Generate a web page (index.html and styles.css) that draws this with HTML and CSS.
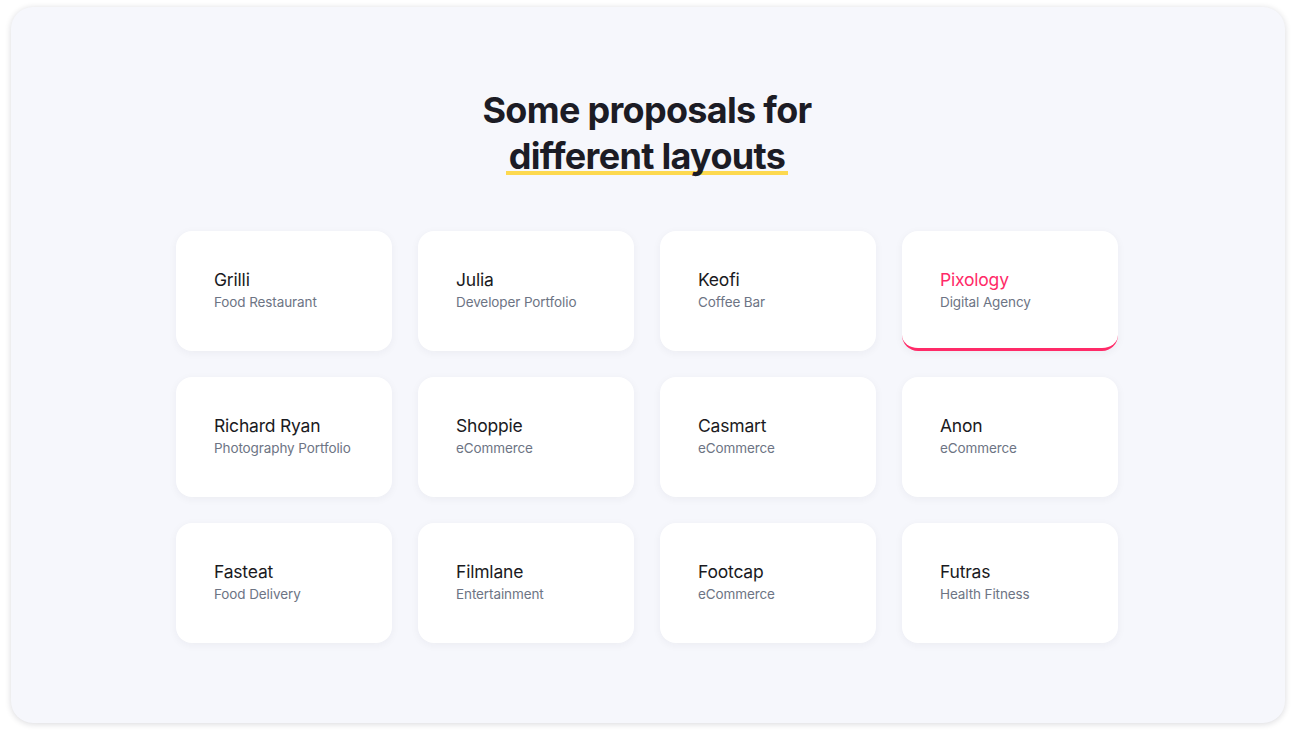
FILE: index.html
```html
<!DOCTYPE html>
<html lang="en">
<head>
<meta charset="utf-8">
<title>Layouts</title>
<link rel="stylesheet" href="styles.css">
</head>
<body>
<main class="frame">
  <h1 class="title">Some proposals for<br><span class="hl">different layouts</span></h1>
  <section class="grid">
    <a class="card"><span class="name">Grilli</span><span class="kind">Food Restaurant</span></a>
    <a class="card"><span class="name">Julia</span><span class="kind">Developer Portfolio</span></a>
    <a class="card"><span class="name">Keofi</span><span class="kind">Coffee Bar</span></a>
    <a class="card active"><span class="name">Pixology</span><span class="kind">Digital Agency</span></a>
    <a class="card"><span class="name">Richard Ryan</span><span class="kind">Photography Portfolio</span></a>
    <a class="card"><span class="name">Shoppie</span><span class="kind">eCommerce</span></a>
    <a class="card"><span class="name">Casmart</span><span class="kind">eCommerce</span></a>
    <a class="card"><span class="name">Anon</span><span class="kind">eCommerce</span></a>
    <a class="card"><span class="name">Fasteat</span><span class="kind">Food Delivery</span></a>
    <a class="card"><span class="name">Filmlane</span><span class="kind">Entertainment</span></a>
    <a class="card"><span class="name">Footcap</span><span class="kind">eCommerce</span></a>
    <a class="card"><span class="name">Futras</span><span class="kind">Health Fitness</span></a>
  </section>
</main>
</body>
</html>
```
FILE: styles.css
```css
html, body {
  margin: 0;
  padding: 0;
  background: #ffffff;
}
body {
  padding: 7px 11px 13px;
  font-family: Inter, "Noto Sans", sans-serif;
}
.frame {
  box-sizing: border-box;
  height: 716px;
  background: #f6f7fc;
  border-radius: 22px;
  box-shadow: 0 1px 6px rgba(20, 20, 40, 0.16);
  padding-top: 80px;
  padding-right: 2px;
  display: flex;
  flex-direction: column;
  align-items: center;
}
.title {
  margin: 0;
  font-size: 36px;
  line-height: 46px;
  font-weight: 700;
  letter-spacing: -0.7px;
  color: #1c1c25;
  text-align: center;
}
.hl {
  background-image: linear-gradient(#fdd94f, #fdd94f);
  background-repeat: no-repeat;
  background-size: 100% 4px;
  background-position: 0 37px;
  padding: 0 3px;
}
.grid {
  margin-top: 52px;
  display: grid;
  grid-template-columns: repeat(4, 216px);
  grid-auto-rows: 120px;
  gap: 26px;
}
.card {
  box-sizing: border-box;
  background: #ffffff;
  border-radius: 16px;
  box-shadow: 0 2px 8px rgba(30, 30, 60, 0.05);
  padding: 0 20px 2px 38px;
  display: flex;
  flex-direction: column;
  justify-content: center;
  gap: 1px;
}
.name {
  font-size: 17.5px;
  line-height: 22px;
  font-weight: 400;
  color: #1a1a22;
  letter-spacing: -0.2px;
}
.kind {
  font-size: 13.5px;
  line-height: 20px;
  color: #6d7484;
  letter-spacing: -0.1px;
}
.card.active {
  border-bottom: 3px solid #ff2a68;
  padding-top: 3px;
}
.card.active .name {
  color: #ff2a68;
}
```
